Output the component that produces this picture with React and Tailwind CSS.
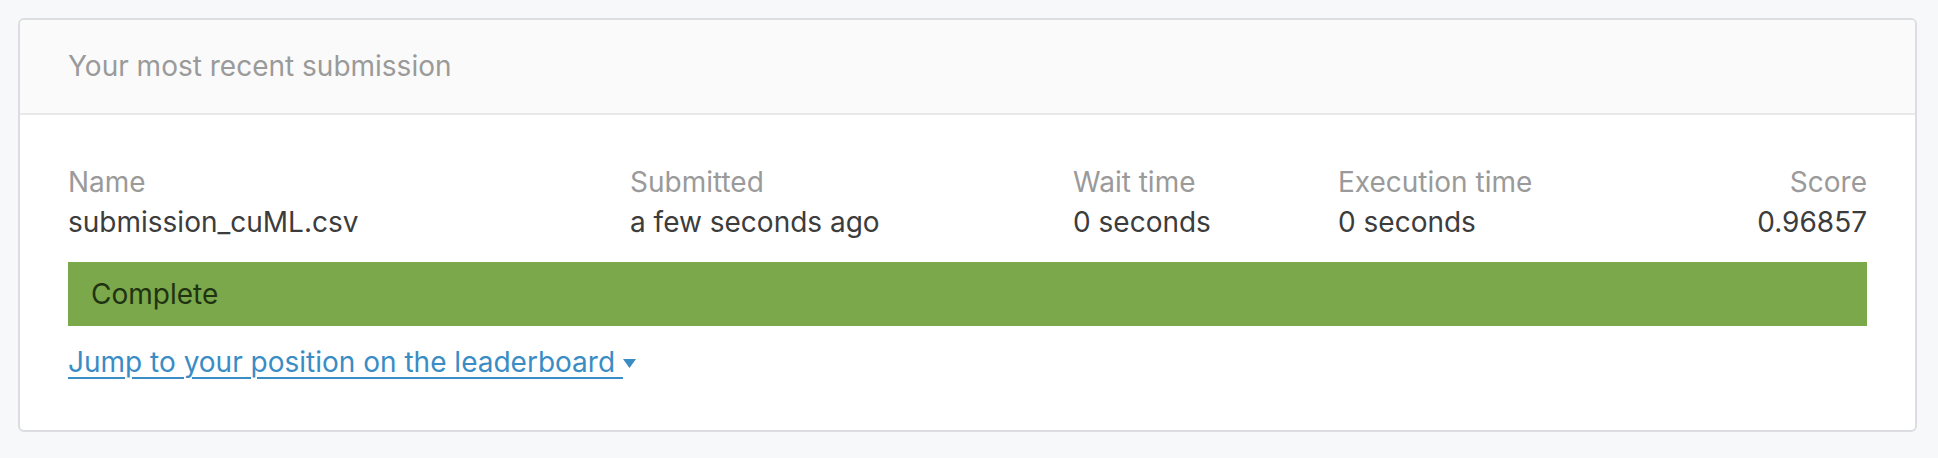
import React from 'react';

const columns = [
  { label: 'Name', value: 'submission_cuML.csv' },
  { label: 'Submitted', value: 'a few seconds ago' },
  { label: 'Wait time', value: '0 seconds' },
  { label: 'Execution time', value: '0 seconds' },
];

const SubmissionCard = () => {
  return (
    <div className="ml-[18px] mt-[18px] w-[1899px] rounded-[6px] border-2 border-[#dcdde0] bg-white overflow-hidden">
      {/* Header */}
      <div className="bg-[#fafafa] border-b-2 border-[#e9e9ea] px-[48px] pt-[26px] pb-[27px]">
        <h2 className="text-[28px] leading-[40px] text-[#9a9a9a] font-normal">
          Your most recent submission
        </h2>
      </div>

      {/* Body */}
      <div className="p-[48px] pt-[47px]">
        <div className="grid grid-cols-[562px_443px_265px_1fr_auto] text-[28px] leading-[40px]">
          {columns.map((col) => (
            <div key={col.label}>
              <div className="text-[#9a9a9a]">{col.label}</div>
              <div className="text-[#3c3c3c]">{col.value}</div>
            </div>
          ))}
          <div className="text-right">
            <div className="text-[#9a9a9a]">Score</div>
            <div className="text-[#3c3c3c]">0.96857</div>
          </div>
        </div>

        <div className="mt-[20px] h-[64px] bg-[#7aa84a] px-[23px] py-[12px] text-[28px] leading-[40px] text-[#1f3312]">
          Complete
        </div>

        <div className="mt-[16px] text-[28px] leading-[40px]">
          <a href="#" className="text-[#3a8cc4] underline underline-offset-[5px] decoration-[2px] inline-flex items-center">
            <span>Jump to your position on the leaderboard&nbsp;</span>
            <svg width="13" height="9" viewBox="0 0 13 9" className="mt-[3px]">
              <path d="M0 0 L13 0 L6.5 9 Z" fill="#3a8cc4" />
            </svg>
          </a>
        </div>
      </div>
    </div>
  );
};

export default function App() {
  return (
    <div className="w-[1938px] h-[458px] bg-[#f7f8fa] pt-px" style={{ fontFamily: 'Inter, "Noto Sans", sans-serif' }}>
      <div className="-mt-px">
        <SubmissionCard />
      </div>
    </div>
  );
}
